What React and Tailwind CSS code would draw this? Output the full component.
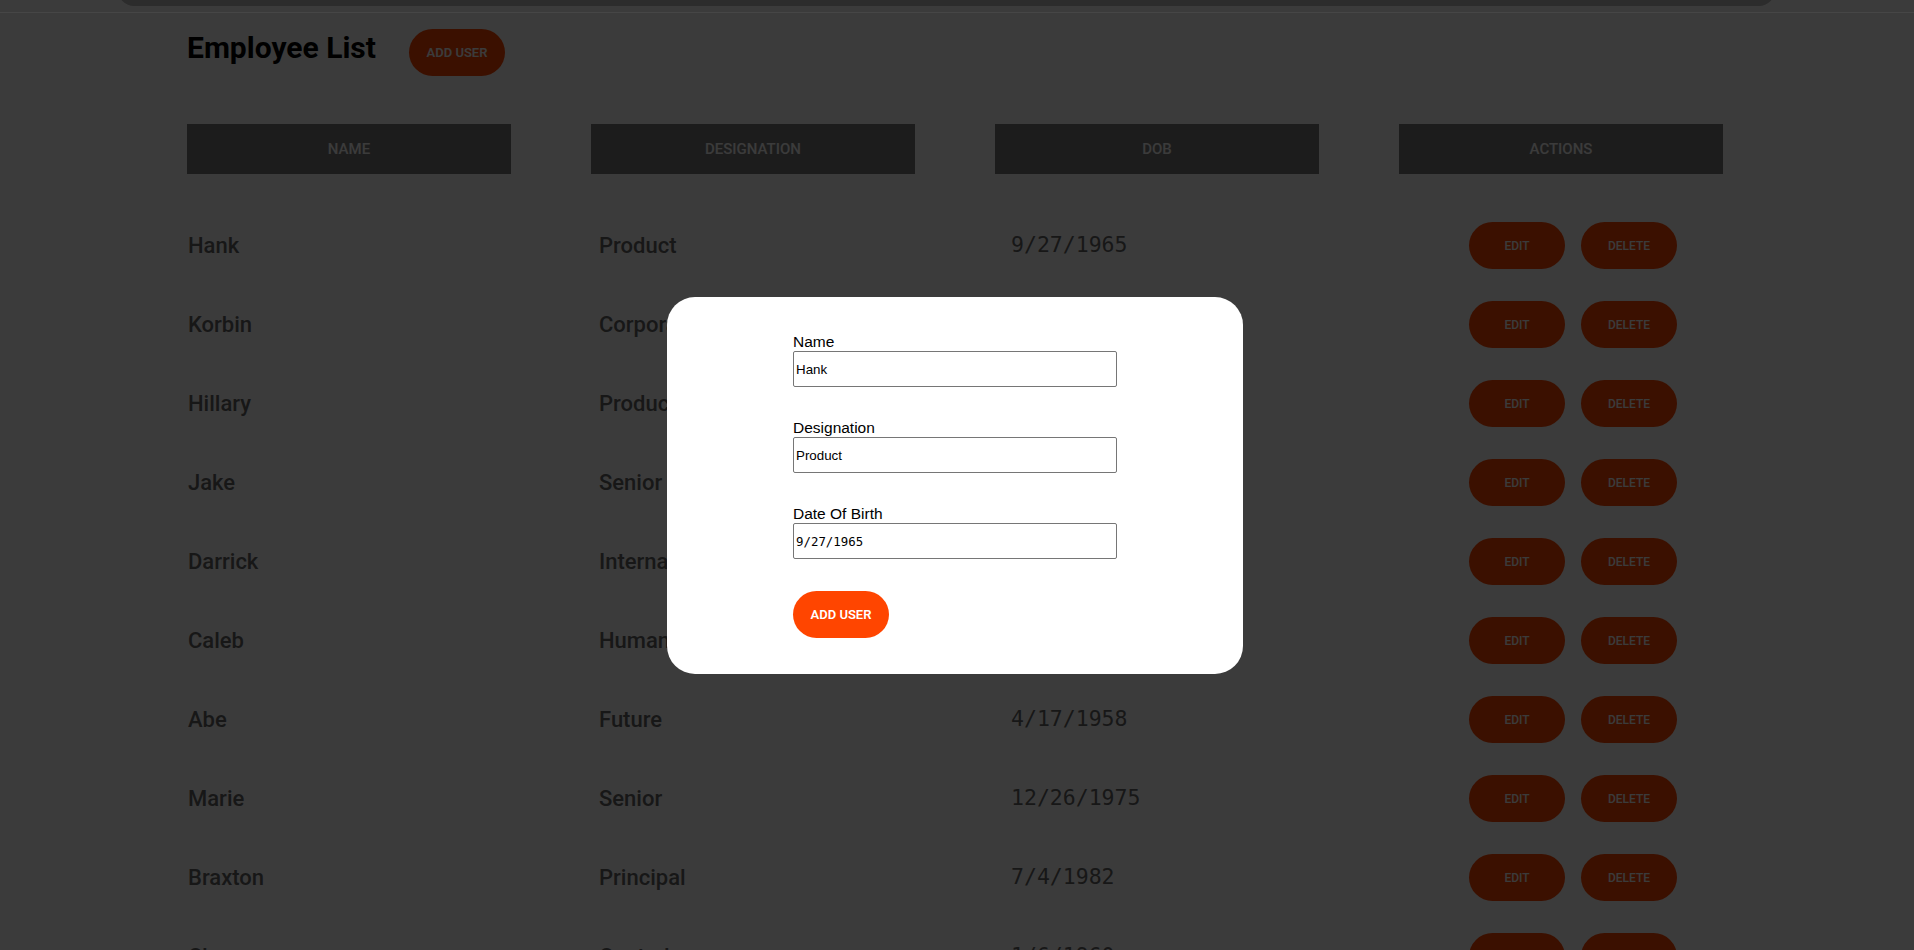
import React from 'react';

const employees = [
    { name: 'Hank', designation: 'Product', dob: '9/27/1965' },
    { name: 'Korbin', designation: 'Corporate', dob: '3/14/1971' },
    { name: 'Hillary', designation: 'Product', dob: '11/2/1969' },
    { name: 'Jake', designation: 'Senior', dob: '6/19/1980' },
    { name: 'Darrick', designation: 'International', dob: '2/8/1974' },
    { name: 'Caleb', designation: 'Human', dob: '10/30/1985' },
    { name: 'Abe', designation: 'Future', dob: '4/17/1958' },
    { name: 'Marie', designation: 'Senior', dob: '12/26/1975' },
    { name: 'Braxton', designation: 'Principal', dob: '7/4/1982' },
    { name: 'Chase', designation: 'Central', dob: '1/6/1960' },
];

const headers = ['NAME', 'DESIGNATION', 'DOB', 'ACTIONS'];

const pageFont = "font-['Roboto','Liberation_Sans',sans-serif]";

const EmployeeList = () => {
    return (
        <div className={`min-h-screen bg-white ${pageFont}`}>
            {/* navbar, mostly scrolled away */}
            <div className="ml-[118px] w-[1657px] h-[40px] -mt-[34px] bg-[#bdbdbd] rounded-b-[16px]" />

            <div className="pl-[185px]">
                <div className="flex items-start mt-[23px]">
                    <h1 className="w-[224px] shrink-0 pl-[2px] mt-[4px] text-[30px] leading-none font-bold text-black">Employee List</h1>
                    <button className="h-[47px] w-[96px] rounded-full bg-[#ff4500] text-white text-[13px] font-semibold">ADD USER</button>
                </div>

                <div className="mt-[48px] ml-[2px] flex gap-[80px]">
                    {headers.map((h) => (
                        <div key={h} className="w-[324px] h-[50px] bg-[#7b7b7b] text-white text-[15px] font-medium flex items-center justify-center">
                            {h}
                        </div>
                    ))}
                </div>

                <div className="mt-8">
                    {employees.map((emp) => (
                        <div key={emp.name} className="flex items-center py-4 text-[#666666] text-[22px] font-medium">
                            <div className="w-[411px] pl-[3px]">{emp.name}</div>
                            <div className="w-[413px] pl-[3px]">{emp.designation}</div>
                            <div className="w-[460px] pl-[2px] text-[21.5px] font-normal font-['DejaVu_Sans_Mono',monospace]">{emp.dob}</div>
                            <div className="flex gap-4">
                                <button className="h-[47px] w-[96px] rounded-full bg-[#ff4500] text-white text-[12px] font-medium">EDIT</button>
                                <button className="h-[47px] w-[96px] rounded-full bg-[#ff4500] text-white text-[12px] font-medium">DELETE</button>
                            </div>
                        </div>
                    ))}
                </div>
            </div>
        </div>
    );
};

const Field = ({ label, value, mono }) => (
    <div className="flex flex-col">
        <label className="text-[15.5px] leading-[18px] text-black font-['Liberation_Sans',sans-serif]">{label}</label>
        <input
            type="text"
            defaultValue={value}
            className={`h-[36px] w-[324px] border border-[#767676] rounded-[2px] px-[2px] text-black outline-none ${
                mono ? "text-[12.4px] font-['DejaVu_Sans_Mono',monospace]" : "text-[13.33px] font-['Liberation_Sans',sans-serif]"
            }`}
        />
    </div>
);

const AddUserModal = () => (
    <div className="fixed inset-0 bg-black/[0.77] flex flex-col">
        <div className="mt-[12px] h-px bg-[#464646]" />
        <div className="flex justify-center pr-[4px] pt-[284px]">
            <div className="w-[576px] bg-white rounded-[28px] px-[126px] py-[36px] flex flex-col gap-8">
                <Field label="Name" value="Hank" />
                <Field label="Designation" value="Product" />
                <Field label="Date Of Birth" value="9/27/1965" mono />
                <button className={`h-[47px] w-[96px] rounded-full bg-[#ff4500] text-white text-[13px] font-semibold ${pageFont}`}>ADD USER</button>
            </div>
        </div>
    </div>
);

export default function App() {
    return (
        <div className="relative overflow-hidden h-[950px]">
            <EmployeeList />
            <AddUserModal />
        </div>
    );
}
